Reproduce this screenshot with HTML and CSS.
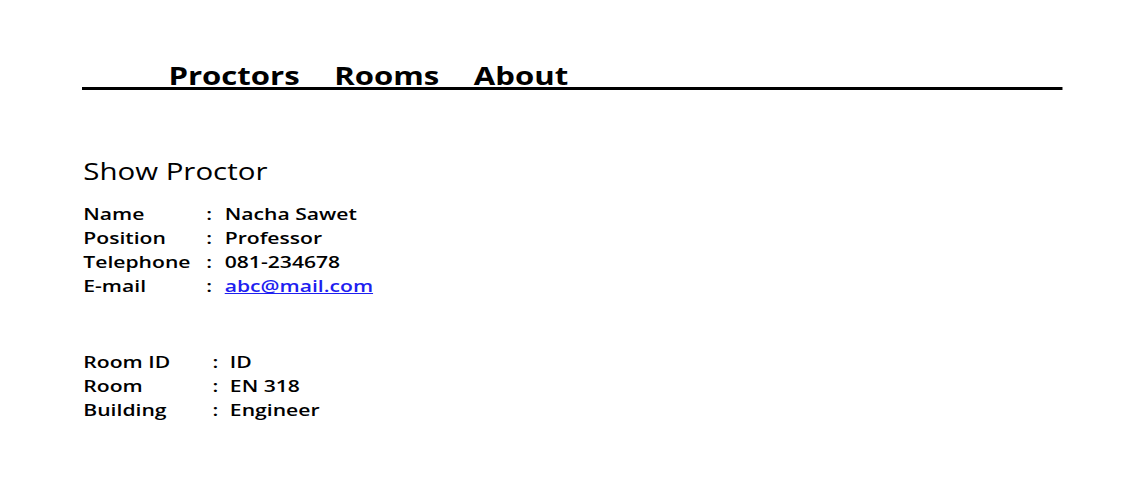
FILE: index.html
```html
<!DOCTYPE html>
<html>
<head>
<meta charset="utf-8">
<link rel="stylesheet" href="styles.css">
</head>
<body>
<div class="page">
  <nav class="nav">
    <a class="nav-link" href="#">Proctors</a>
    <a class="nav-link" href="#">Rooms</a>
    <a class="nav-link" href="#">About</a>
  </nav>
  <main class="content">
    <h1 class="title">Show Proctor</h1>
    <div class="info info-proctor">
      <span class="label">Name</span><span class="sep">:</span><span class="value">Nacha Sawet</span>
      <span class="label">Position</span><span class="sep">:</span><span class="value">Professor</span>
      <span class="label">Telephone</span><span class="sep">:</span><span class="value">081-234678</span>
      <span class="label">E-mail</span><span class="sep">:</span><span class="value"><a class="mail" href="#">abc@mail.com</a></span>
    </div>
    <div class="info info-room">
      <span class="label">Room ID</span><span class="sep">:</span><span class="value">ID</span>
      <span class="label">Room</span><span class="sep">:</span><span class="value">EN 318</span>
      <span class="label">Building</span><span class="sep">:</span><span class="value">Engineer</span>
    </div>
  </main>
</div>
</body>
</html>
```
FILE: styles.css
```css
html, body {
  margin: 0;
  padding: 0;
  background: #fff;
}
body {
  font-family: "Open Sans", "Liberation Sans", sans-serif;
  color: #000;
  width: 1148px;
  height: 495px;
  overflow: hidden;
  padding-left: 82px;
  box-sizing: border-box;
}
/* the source document is rendered horizontally stretched */
.page {
  width: 766px;
  transform: scaleX(1.28);
  transform-origin: 0 0;
}
.nav {
  margin-top: 65px;
  padding-left: 67.5px;
  display: flex;
  gap: 27px;
  border-bottom: 3px solid #000;
}
.nav-link {
  font-weight: 700;
  font-size: 24.3px;
  line-height: 22px;
  color: #000;
  text-decoration: none;
}
.content {
  padding-left: 1px;
}
.title {
  margin: 67px 0 0;
  font-size: 23px;
  font-weight: 400;
  line-height: 28px;
}
.info {
  display: grid;
  font-size: 16.5px;
  font-weight: 600;
  line-height: 24px;
}
.info-proctor {
  margin-top: 17px;
  grid-template-columns: 96px 14.5px auto;
}
.info-room {
  margin-top: 52px;
  grid-template-columns: 101px 13.5px auto;
}
.mail {
  color: #1f1ff0;
  text-decoration: underline;
}
```
